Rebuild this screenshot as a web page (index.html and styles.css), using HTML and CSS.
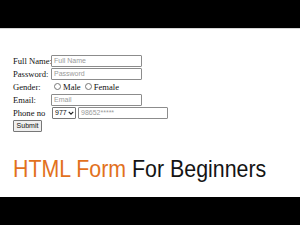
FILE: index.html
```html
<!DOCTYPE html>
<html lang="en">
<head>
    <meta charset="UTF-8">
    <meta name="viewport" content="width=device-width, initial-scale=1.0">
    <title>HTML Form For Beginners</title>
    <link rel="stylesheet" href="styles.css">
</head>
<body>
    <div class="bar top"></div>
    <div class="page">
        <form class="form">
            <label for="name">Full Name:</label>
            <div><input type="text" id="name" placeholder="Full Name"></div>

            <label for="pass">Password:</label>
            <div><input type="password" id="pass" placeholder="Password"></div>

            <label>Gender:</label>
            <div class="gender">
                <input type="radio" name="gender" id="male"><label for="male">Male</label>
                <input type="radio" name="gender" id="female"><label for="female">Female</label>
            </div>

            <label for="email">Email:</label>
            <div><input type="text" id="email" placeholder="Email"></div>

            <label for="phone">Phone no</label>
            <div class="phone">
                <span class="select">
                    <select id="code"><option>977</option></select>
                    <svg class="chev" viewBox="0 0 8 8" width="6" height="6"><path d="M1 2.5 L4 5.5 L7 2.5" fill="none" stroke="#222" stroke-width="1.6"/></svg>
                </span>
                <input type="text" id="phone" class="num" placeholder="98652*****">
            </div>

            <div class="actions"><button type="button">Submit</button></div>
        </form>
        <h1 class="title"><span class="orange">HTML Form</span> For Beginners</h1>
    </div>
    <div class="bar bottom"></div>
</body>
</html>
```

FILE: styles.css
```css
body { margin: 0; width: 300px; height: 225px; display: flex; flex-direction: column; background: #fff; font-family: "Liberation Serif", serif; overflow: hidden; }
.bar { height: 28px; background: #000; flex: none; }
.top { border-bottom: 1px solid #d4d4d4; }
.page { flex: 1; padding: 25px 0 0 13px; }
.form { display: grid; grid-template-columns: 38px auto; grid-auto-rows: 13px; align-items: center; font-size: 8.6px; color: #111; }
.form label { white-space: nowrap; }
.form input[type=text], .form input[type=password] { box-sizing: border-box; width: 91px; height: 12px; margin: 0; padding: 0 2px; border: 1px solid #8c8c8c; border-radius: 1px; font-family: "Liberation Sans", sans-serif; font-size: 7px; display: block; }
.form input::placeholder { color: #9a9a9a; }
.gender { display: flex; align-items: center; padding-left: 3px; }
.gender input { appearance: none; width: 7px; height: 7px; margin: 0 2px 0 0; border: 1px solid #777; border-radius: 50%; box-sizing: border-box; }
.gender label { margin-right: 4px; }
.phone { display: flex; align-items: center; gap: 2px; padding-left: 1px; }
.select { position: relative; display: block; }
.select select { appearance: none; box-sizing: border-box; width: 24px; height: 12px; margin: 0; padding: 0 0 0 2px; border: 1px solid #777; border-radius: 1px; background: #fff; font-family: "Liberation Sans", sans-serif; font-size: 7px; color: #111; display: block; }
.chev { position: absolute; right: 2px; top: 3px; }
.form input.num { width: 90px; }
.actions { grid-column: 1 / span 2; }
.actions button { box-sizing: border-box; width: 29px; height: 12px; margin: 0; padding: 0; border: 1px solid #777; border-radius: 1px; background: #efefef; font-family: "Liberation Sans", sans-serif; font-size: 7px; color: #111; display: block; }
.title { margin: 25px 0 0; font-family: "Liberation Sans", Arial, sans-serif; font-weight: normal; font-size: 24px; line-height: 24px; color: #141414; transform: scaleX(0.89); transform-origin: left; white-space: nowrap; }
.orange { color: #e2711d; }
```
